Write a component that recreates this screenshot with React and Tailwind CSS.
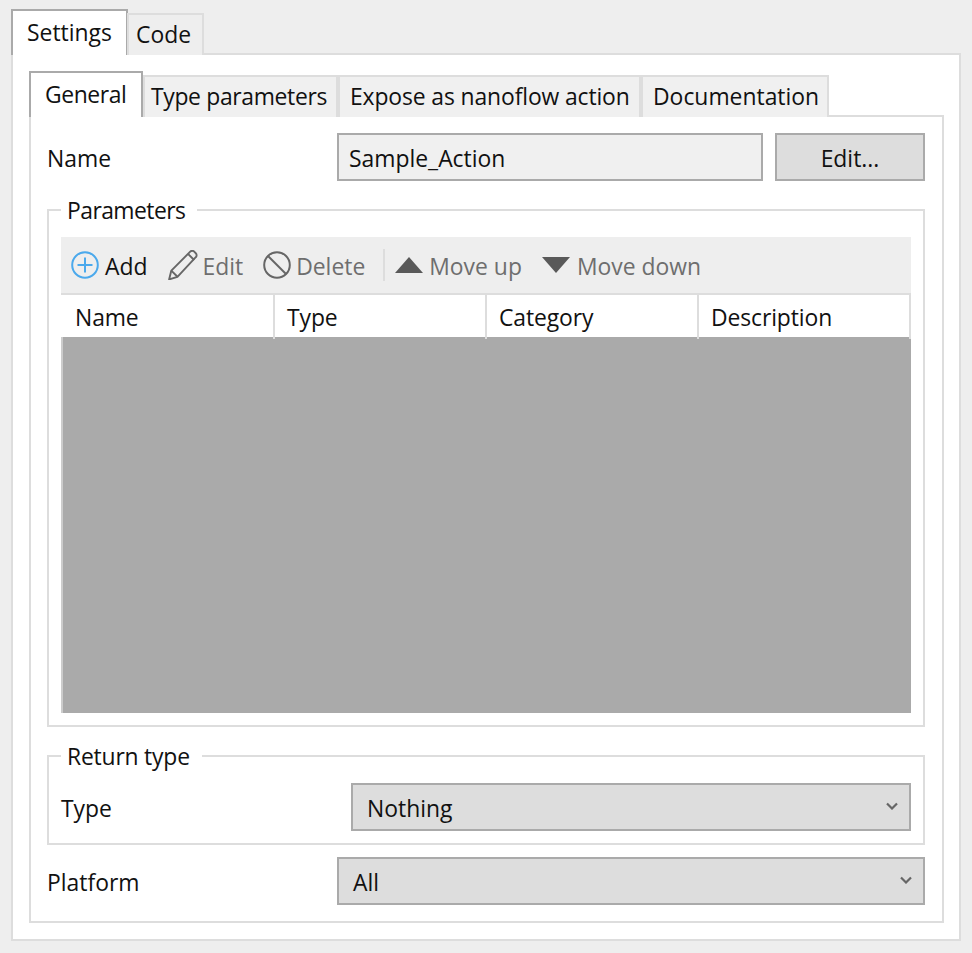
import React from "react";

function AddIcon() {
  return (
    <svg width="28" height="28" viewBox="0 0 28 28" fill="none" stroke="#4ba9ec" strokeWidth="2">
      <circle cx="14" cy="14" r="12.8" />
      <path d="M14 6.5v15M6.5 14h15" />
    </svg>
  );
}

function PencilIcon() {
  return (
    <svg width="30" height="30" viewBox="1.5 1.5 27 27" fill="none" stroke="#666" strokeWidth="1.7" strokeLinejoin="round">
      <path d="M2.5 28l2-8L21.5 3c1-1 2.6-1 3.6 0l1.4 1.4c1 1 1 2.6 0 3.6L10 25.6z" />
      <path d="M4.5 20l5.5 5.6M19.5 5l5.5 5.5" />
    </svg>
  );
}

function BanIcon() {
  return (
    <svg width="28" height="28" viewBox="0 0 28 28" fill="none" stroke="#666" strokeWidth="2">
      <circle cx="14" cy="14" r="12.8" />
      <path d="M5 5l18 18" />
    </svg>
  );
}

function Chevron() {
  return (
    <svg width="12" height="8" viewBox="0 0 12 8" fill="none" stroke="#666" strokeWidth="2.2" className="-mt-[2px]">
      <path d="M1 1.5l5 5 5-5" />
    </svg>
  );
}

function Select({ value, width }) {
  return (
    <div className={`flex items-center justify-between h-12 border-2 border-[#aaa] bg-[#ddd] pl-[14px] pr-[11px] ${width}`}>
      <span className="pt-1">{value}</span>
      <Chevron />
    </div>
  );
}

function ToolItem({ icon, label, active, className }) {
  return (
    <div className={`flex items-center ${className}`}>
      {icon}
      <span className={`pt-1 ${active ? "text-[#111]" : "text-[#6e6e6e]"}`}>{label}</span>
    </div>
  );
}

function HeaderCell({ label, last }) {
  return (
    <div className={`flex items-center w-[212px] h-[44px] pl-3 pt-[2px] ${last ? "" : "border-r-2 border-[#ddd]"}`}>
      <span className="tracking-[-0.1px]">{label}</span>
    </div>
  );
}

export default function App() {
  return (
    <div className="w-[972px] h-[953px] bg-[#eee] pl-[11px] pt-[9px] text-[#111] text-[22.9px] leading-8 whitespace-nowrap font-['Open_Sans','Noto_Sans',sans-serif] overflow-hidden">
      {/* outer tabs */}
      <div className="flex items-end h-[46px] relative z-10 -mb-[2px]">
        <div className="flex items-center w-[117px] h-[46px] pl-[14px] bg-white border-2 border-b-0 border-[#aaa]">Settings</div>
        <div className="flex items-center w-[77px] h-[42px] pl-[7px] -ml-[1px] bg-[#eee] border-2 border-b-0 border-[#ddd]">Code</div>
      </div>
      <div className="w-[950px] h-[888px] bg-white border-2 border-[#ddd] pl-4 pt-4">
        {/* inner tabs */}
        <div className="flex items-end h-[46px] relative z-10 -mb-[2px]">
          <div className="flex items-center w-[114px] h-[46px] pl-[14px] bg-white border-2 border-b-0 border-[#aaa] tracking-[-0.4px]">General</div>
          <div className="flex items-center w-[195px] h-[42px] pl-[6px] bg-[#f0f0f0] border-2 border-b-0 border-[#ddd] tracking-[-0.33px]">Type parameters</div>
          <div className="flex items-center w-[303px] h-[42px] pl-[10px] bg-[#f0f0f0] border-2 border-b-0 border-[#ddd] tracking-[-0.12px]">Expose as nanoflow action</div>
          <div className="flex items-center w-[188px] h-[42px] pl-[10px] bg-[#f0f0f0] border-2 border-b-0 border-[#ddd]">Documentation</div>
        </div>
        <div className="w-[915px] h-[808px] border-2 border-[#ddd] px-4 pt-4">
          {/* name row */}
          <div className="flex items-center h-12">
            <div className="w-[290px] pt-1">Name</div>
            <div className="flex items-center w-[426px] h-12 border-2 border-[#aaa] bg-[#f0f0f0] pl-[10px] pt-1">Sample_Action</div>
            <div className="flex items-center justify-center w-[150px] h-12 ml-3 border-2 border-[#aaa] bg-[#ddd] pt-1">Edit...</div>
          </div>

          <fieldset className="w-[878px] h-[533px] mt-[13px] border-2 border-[#ddd] px-3 pb-3">
            <legend className="pl-[6px] pr-3 leading-8"><span className="relative top-[1px] tracking-[-0.55px]">Parameters</span></legend>
            <div className="mt-[11px] flex items-center h-[56px] bg-[#eee]">
              <ToolItem className="ml-[10px] gap-[6px]" icon={<AddIcon />} label="Add" active />
              <ToolItem className="ml-[21px] gap-[4px]" icon={<PencilIcon />} label="Edit" />
              <ToolItem className="ml-[20px] gap-[5px]" icon={<BanIcon />} label="Delete" />
              <div className="w-[2px] h-8 ml-[18px] bg-[#ddd]" />
              <ToolItem
                className="ml-[10px] gap-[6px]"
                icon={
                  <svg width="28" height="16" viewBox="0 0 28 16" fill="#595959">
                    <path d="M14 0l14 16H0z" />
                  </svg>
                }
                label="Move up"
              />
              <ToolItem
                className="ml-[20px] gap-[7px]"
                icon={
                  <svg width="28" height="16" viewBox="0 0 28 16" fill="#595959">
                    <path d="M0 0h28L14 16z" />
                  </svg>
                }
                label="Move down"
              />
            </div>
            <div className="h-[420px] border-t-2 border-[#ddd]">
              <div className="flex -mb-[2px] ml-[2px] relative">
                <HeaderCell label="Name" />
                <HeaderCell label="Type" />
                <HeaderCell label="Category" />
                <HeaderCell label="Description" />
              </div>
              <div className="h-[376px] bg-[#aaa] border-l-2 border-[#ccc]" />
            </div>
          </fieldset>

          <fieldset className="w-[878px] h-[105px] mt-[13px] border-2 border-[#ddd] px-3">
            <legend className="pl-[6px] pr-3 leading-8"><span className="relative top-[1px] tracking-[-0.2px]">Return type</span></legend>
            <div className="mt-[11px] flex items-center">
              <div className="w-[290px] pt-1">Type</div>
              <Select value="Nothing" width="w-[560px]" />
            </div>
          </fieldset>

          <div className="flex items-center mt-3">
            <div className="w-[290px] pt-1">Platform</div>
            <Select value="All" width="w-[588px]" />
          </div>
        </div>
      </div>
    </div>
  );
}
